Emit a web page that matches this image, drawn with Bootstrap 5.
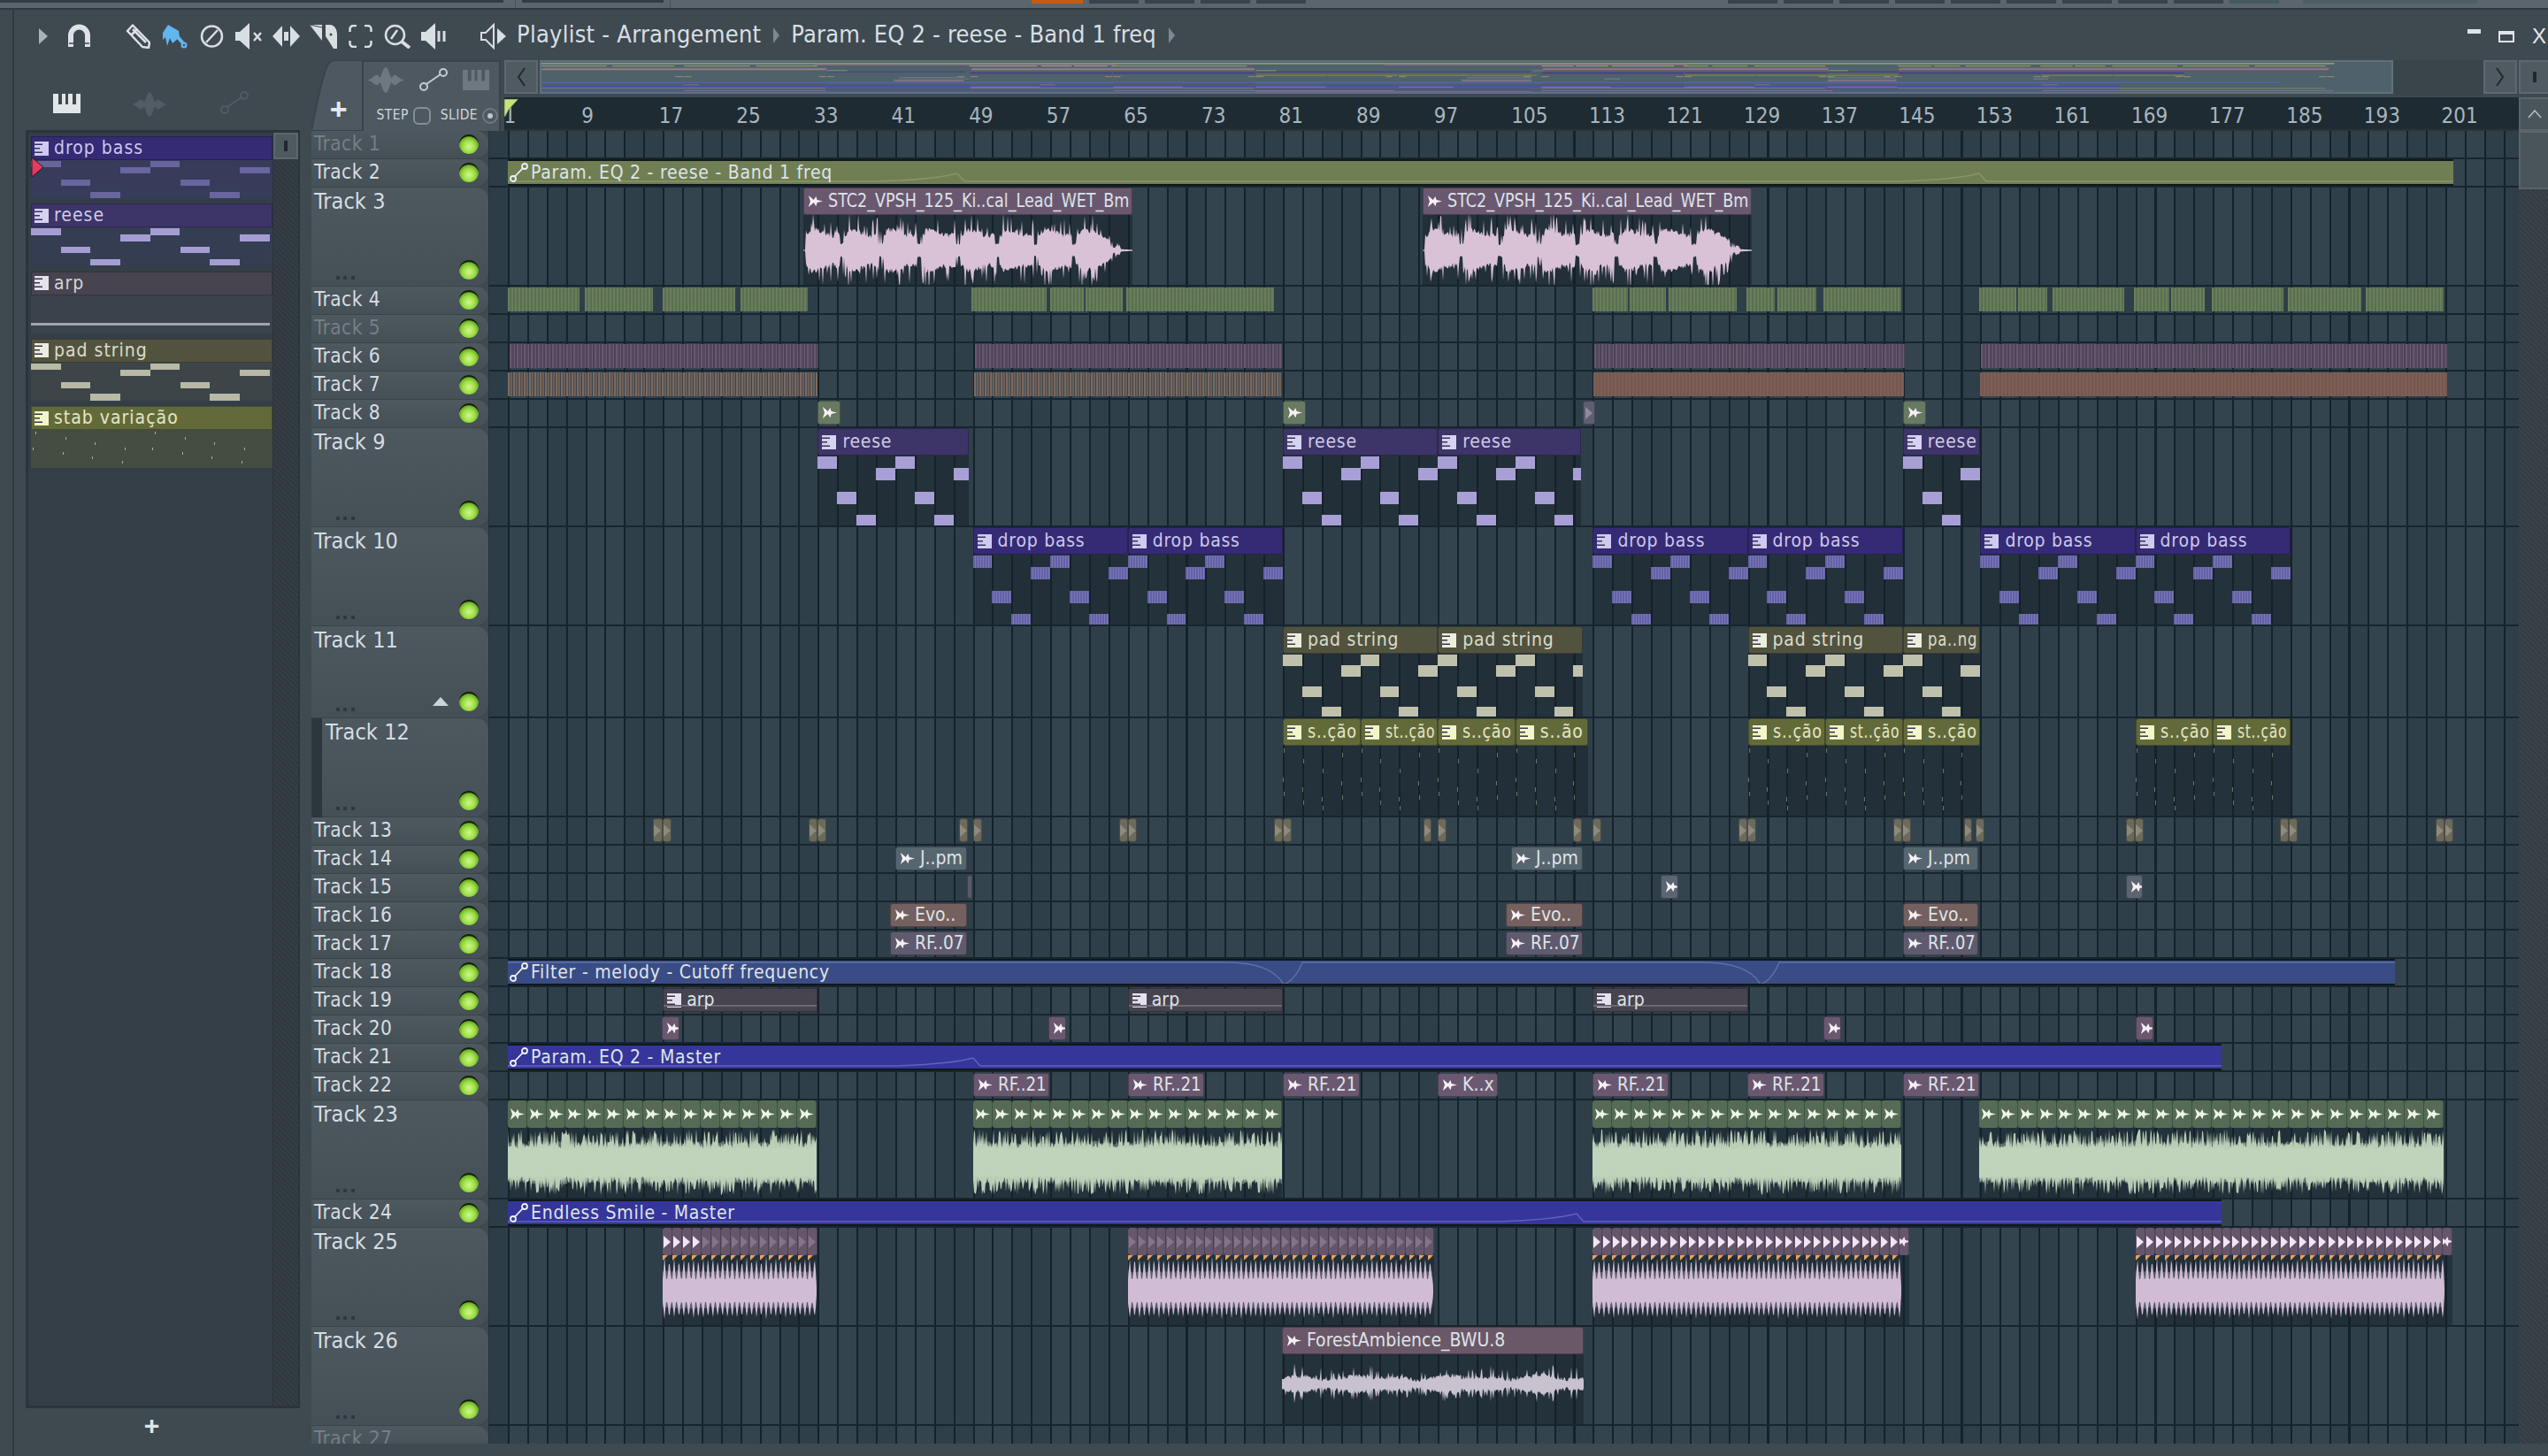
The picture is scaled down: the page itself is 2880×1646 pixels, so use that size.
<!DOCTYPE html>
<html lang="en">
<head>
<meta charset="UTF-8">
<title>Playlist - Arrangement</title>
<link href="https://cdn.jsdelivr.net/npm/bootstrap@5.3.0/dist/css/bootstrap.min.css" rel="stylesheet">
<style>
  html, body { height: 100%; }
  body { background: #3f4950; color: #d5dde2; font-family: "DejaVu Sans Condensed", "DejaVu Sans", sans-serif; font-size: 22px; line-height: 1; }

  /* main window strip */
  .topstrip { height: 11px; background: #5a656d; border-bottom: 2px solid #2f383e; gap: 7px; }
  .strip-box { height: 3px; background: #343c42; }
  .strip-a { width: 569px; margin-right: 6px; }
  .strip-div { width: 1px; height: 9px; background: #48525a; }
  .strip-b { width: 160px; }
  .strip-orange { width: 58px; height: 4px; background: #c85a10; margin-left: 401px; }
  .strip-tab { width: 56px; height: 4px; background: #3a4349; }
  .strip-gap { margin-left: 470px; }
  .strip-teal { width: 56px; height: 4px; background: #445a5c; }
  .strip-end { flex: 1; height: 4px; background: #4c6062; margin-left: 20px; margin-right: 80px; }

  .shell { border-left: 2px solid #30393f; margin-left: 14px; }
  .titlebar { height: 57px; padding-top: 3px; }
  .ttl-main { font-size: 27px; letter-spacing: .25px; margin-left: 12px; color: #d8dfe4; margin-top: -6px; }
  .ttl-sub { font-size: 27px; letter-spacing: .18px; color: #d8dfe4; margin-top: -6px; }
  .ttl-arrow { width: 0; height: 0; border-left: 7px solid #7d888f; border-top: 9px solid transparent; border-bottom: 9px solid transparent; margin: -3px 13px 0 14px; }
  .g10 { margin-left: 28px; } .g11 { margin-left: 11px; } .g12 { margin-left: 12px; } .g13 { margin-left: 13px; } .g14 { margin-left: 14px; } .g22 { margin-left: 22px; } .g38 { margin-left: 38px; } .g39 { margin-left: 39px; }
  .win-btns { gap: 20px; margin-right: -2px; }
  .wb-min { width: 15px; height: 5px; background: #dfe4e8; margin-bottom: 12px; }
  .wb-max { width: 18px; height: 13px; border: 2px solid #dfe4e8; border-top-width: 4px; }
  .wb-x { font-size: 24px; width: 20px; color: #e4e8eb; font-family: "Liberation Sans", sans-serif; }

  /* picker */
  .picker { width: 336px; padding-left: 13px; }
  .pick-tabs { height: 79px; padding-left: 31px; padding-bottom: 19px; }
  .pick-wave { margin-left: 58px; margin-bottom: -4px; }
  .pick-node { margin-left: 60px; margin-bottom: -1px; }
  .pick-box { height: 1445px; width: 310px; background: #343e46; border: 3px solid #2b343a; border-right-width: 2px; }
  .pick-list { width: 276px; padding: 4px 0 0 3px; gap: 6.3px; }
  .pick-item { height: 70px; }
  .pick-head { height: 27px; border: 1px solid rgba(15,20,30,.35); padding-left: 3px; gap: 6px; font-size: 21px; letter-spacing: 1px; }
  .pick-body { height: 43px; }
  .pick-note { position: absolute; height: 7.4px; }
  .pick-scroll { width: 29px; background: repeating-linear-gradient(45deg, #2f383e 0 2px, #353e45 2px 4px); border-left: 1px solid #2b343a; }
  .pick-stop { height: 30px; background: #4e5960; border: 2px solid #5b666d; }
  .pick-stop i { width: 4px; height: 12px; background: #20282d; }
  .pick-add { height: 40px; color: #dfe4e8; font-size: 30px; font-weight: 700; padding-right: 38px; font-family: "Liberation Sans", sans-serif; }
  .pick-mark { position: absolute; left: 3px; top: 27px; }

  /* arrangement header */
  .arr { width: 2528px; }
  .arr-head { height: 80px; }
  .tab-plus { width: 60px; }
  .tab-plus b { font-size: 34px; color: #e6eaed; font-family: "Liberation Sans", sans-serif; margin-bottom: 8px; margin-left: 8px; }
  .tab-snap { width: 160px; background: #4d5860; border: 2px solid #3a4349; border-bottom: 0; }
  .snap-row { gap: 17px; height: 40px; padding-left: 7px; }
  .snap-lbl { font-size: 15.5px; letter-spacing: .4px; color: #cfd6db; padding: 11px 0 0 18px; }
  .snap-box { width: 20px; height: 20px; border: 2px solid #838e95; border-radius: 6px; margin: 0 11px 0 5px; }
  .snap-dot { width: 18px; height: 18px; border: 2px solid #6d7880; border-radius: 50%; margin-left: 5px; }
  .snap-dot i { width: 6px; height: 6px; border-radius: 50%; background: #bfc7cc; }
  .arr-over { height: 42px; }
  .nav-btn { width: 38px; height: 38px; background: #4f5a61; border: 2px solid #5d6870; margin-right: 2px; }
  .nav-last { width: 33px; margin-right: 0; border-right: 0; }
  .nav-last i { width: 4px; height: 12px; background: #20282d; }
  .over-map { width: 2095px; height: 38px; background: #4f616b; border: 2px solid #60717b; }
  .over-rest { flex: 1; height: 40px; background: #3a444b; }
  .ruler { height: 38px; background: #1e2b33; border-bottom: 2px solid #27343c; padding-top: 9px; overflow: hidden; }
  .ruler-cell { flex: 0 0 87.6px; font-size: 24px; color: #a9b6be; }
  .ruler-flag { position: absolute; left: 0; top: 2px; }
  .up-btn { width: 33px; height: 38px; background: #4a545b; border: 2px solid #59646b; border-right: 0; }

  /* tracks */
  .tracks { height: 1484px; }
  .trk { flex: 0 0 auto; }
  .h32 { height: 32px; } .h104 { height: 104px; } .h112 { height: 112px; }
  .trk-name { width: 200px; background: linear-gradient(#4e585f, #454f56); border-radius: 0 14px 14px 0; padding: 3px 0 0 3px; font-size: 22.5px; letter-spacing: .45px; flex: 0 0 200px; box-shadow: inset 0 -1px 0 #3a4349; }
  .trk-big { font-size: 25px; letter-spacing: .1px; padding-top: 3px; }
  .trk-dim { color: #747f86; }
  .trk-ind { padding-left: 4px; border-left: 12px solid #2d363c; }
  .led { position: absolute; right: 11px; bottom: 6px; width: 22px; height: 22px; border-radius: 50%; background: radial-gradient(circle at 50% 62%, #d4f58c 0, #9ce04a 38%, #6fae24 62%, #13200a 68%, #13200a 78%, #6a747a 82%); }
  .trk-big .led { bottom: 8px; }
  .trk-dots { position: absolute; left: 28px; bottom: 8px; width: 21px; height: 4px; background: repeating-linear-gradient(90deg, #2f383e 0 4px, transparent 4px 8.5px); }
  .trk-ind .trk-dots { left: 16px; }
  .trk-tri { position: absolute; right: 45px; bottom: 14px; border-left: 9px solid transparent; border-right: 9px solid transparent; border-bottom: 10px solid #ccd3d8; }
  .trk-gutter { flex: 0 0 22px; background: #2d3d47; border-left: 1px solid #26333c; border-bottom: 2px solid #17252e; }
  .trk-grid { flex: 1; position: relative; border-bottom: 2px solid #17252e;
    background: repeating-linear-gradient(90deg, #14222b 0 2px, transparent 2px 21.9px), repeating-linear-gradient(90deg, #33444e 0 43.8px, #2f3f49 43.8px 87.6px); }
  .sbar { width: 33px; background: repeating-linear-gradient(45deg, #333c43 0 2px, #3a434a 2px 4px); }
  .sbar-thumb { height: 66px; background: #4a545b; border: 2px solid #59646b; border-right: 0; }

  /* clips on the playlist canvas */
  .clip { position: absolute; top: 0; bottom: 0; overflow: hidden; }
  .clip-head { height: 31px; border-radius: 3px; border: 1px solid rgba(12,18,24,.35); gap: 7px; padding-left: 4px; white-space: nowrap; font-size: 21px; letter-spacing: .75px; color: #dde3e7; overflow: hidden; }
  .clip-head span { display: inline-block; flex: 0 0 auto; transform-origin: left center; position: relative; z-index: 1; }
  .clip-head .lbl-a { letter-spacing: 0; margin-left: -1px; }
  .clip-body { position: absolute; left: 0; right: 0; top: 31px; bottom: 0; background: rgba(22,32,39,.5); }
  .cnote { position: absolute; }
  .tick { position: absolute; width: 1px; height: 5px; background: #687569; }
  .seg { flex: 1 1 0; height: 31px; border-right: 1px solid rgba(12,18,24,.3); border-radius: 3px; min-width: 0; overflow: hidden; }
  .auto-clip { border-top: 2px solid #10171c; border-bottom: 2px solid #10171c; }
  .auto-lbl { position: absolute; left: 2px; top: 2px; gap: 2px; font-size: 21px; letter-spacing: .75px; white-space: nowrap; color: #dfe4e8; }
  .hatch-g { background: repeating-linear-gradient(90deg, #6a7e5c 0 2px, #5a6e50 2px 4px); }
  .hatch-p { background: repeating-linear-gradient(90deg, #675870 0 2px, #54485e 2px 5px, #6b5c72 5px 6px, #4b4355 6px 8px); }
  .hatch-b { background: repeating-linear-gradient(90deg, #7c6a62 0 2px, #4a4f55 2px 3px, #6d6058 3px 5px, #3b444c 5px 6px); }
  .hatch-r { background: repeating-linear-gradient(90deg, #7e5e55 0 2px, #745850 2px 4px); }
  .strip-clip { top: 1px; bottom: 2px; }
  .row-clip .clip-head { height: 100%; }
  .thin-clip .clip-head { padding: 0; justify-content: center; }
  .arp-line { position: absolute; left: 0; right: 0; bottom: 5px; height: 2px; background: #6c6874; }
</style>
</head>
<body class="d-flex flex-column overflow-hidden">

<div class="topstrip d-flex flex-shrink-0">
  <div class="strip-box strip-a"></div><div class="strip-div"></div><div class="strip-box strip-b"></div><div class="strip-div"></div>
  <div class="strip-orange"></div>
  <div class="strip-tab"></div><div class="strip-tab"></div><div class="strip-tab"></div><div class="strip-tab"></div>
  <div class="strip-tab strip-gap"></div><div class="strip-tab"></div><div class="strip-tab"></div><div class="strip-tab"></div><div class="strip-tab"></div><div class="strip-tab"></div><div class="strip-tab"></div><div class="strip-tab"></div><div class="strip-tab"></div>
  <div class="strip-teal"></div><div class="strip-end"></div>
</div>

<div class="shell flex-grow-1 d-flex flex-column">
  <div class="titlebar d-flex align-items-center flex-shrink-0">
    <svg class="g10" width="10" height="18" viewBox="0 0 10 18"><path d="M0 0 10 9 0 18Z" fill="#a8b2b9"/></svg>
    <svg class="g22" width="27" height="28" viewBox="0 0 27 28"><path d="M4 26V13a9.500 9.500 0 0 1 19 0v13" fill="none" stroke="#dde2e6" stroke-width="6"/><path d="M2 22h5M20 22h5" stroke="#3f4950" stroke-width="1.500"/></svg>
    <svg class="g39" width="28" height="28" viewBox="0 0 28 28"><path d="M2 8 8 1.500 27 21 26 27 19 26ZM6 13 13 6M8 6l15 15" fill="none" stroke="#dde2e6" stroke-width="2.500" stroke-linejoin="round"/></svg>
    <svg class="g12" width="30" height="28" viewBox="0 0 30 28"><path d="M2 10 8 1l12 7 1 7-8 7-3-6-3 9-2-10-3 3Z" fill="#61b6ee"/><path d="M19 15 25 22" stroke="#61b6ee" stroke-width="4"/><circle cx="26" cy="24" r="3.500" fill="#61b6ee"/><circle cx="26" cy="24" r="1.200" fill="#3f4950"/></svg>
    <svg class="g14" width="27" height="26" viewBox="0 0 27 26"><circle cx="13.500" cy="13" r="11.500" fill="none" stroke="#d8dee2" stroke-width="2.500"/><path d="M7 20 20 6" stroke="#d8dee2" stroke-width="2.500"/></svg>
    <svg class="g13" width="31" height="30" viewBox="0 0 31 30"><path d="M0 10h5L16 0V30L5 20H0Z" fill="#d8dee2"/><path d="M21 11l8 9M29 11l-8 9" stroke="#d8dee2" stroke-width="2.500"/></svg>
    <svg class="g11" width="31" height="26" viewBox="0 0 31 26"><path d="M0 13 11 1V25ZM31 13 20 1V25Z" fill="#d8dee2"/><path d="M13 8h5v10h-5z" fill="#d8dee2"/></svg>
    <svg class="g11" width="31" height="28" viewBox="0 0 31 28"><path d="M0 1 14 19V1Z" fill="#d8dee2"/><path d="M0 1 14 4" stroke="#3f4950"/><path d="M18 1h5c5 0 8 5 8 11v16h-4l-5-8-4-6Z" fill="#d8dee2"/><circle cx="24" cy="12" r="1.500" fill="#3f4950"/></svg>
    <svg class="g13" width="27" height="26" viewBox="0 0 27 26" fill="none" stroke="#d8dee2" stroke-width="2.500"><path d="M1.500 8V5a4 4 0 0 1 4-4H9M18 1h3.500a4 4 0 0 1 4 4v3M25.500 18v3a4 4 0 0 1-4 4H18M9 25H5.500a4 4 0 0 1-4-4v-3"/></svg>
    <svg class="g13" width="31" height="28" viewBox="0 0 31 28"><circle cx="12.500" cy="12.500" r="10.500" fill="none" stroke="#d8dee2" stroke-width="2.500"/><path d="M20 20 29 27" stroke="#d8dee2" stroke-width="4"/><path d="M8 17 15 7" stroke="#d8dee2" stroke-width="2.500"/></svg>
    <svg class="g11" width="29" height="30" viewBox="0 0 29 30"><path d="M0 10h5L16 0V30L5 20H0Z" fill="#d8dee2"/><path d="M20 9V21M26 9V21" stroke="#d8dee2" stroke-width="3"/></svg>
    <svg class="g38" width="29" height="30" viewBox="0 0 29 30"><path d="M1 11h5L15 2V28L6 19H1Z" fill="none" stroke="#d8dee2" stroke-width="2"/><path d="M19 6 29 15 19 24Z" fill="#d8dee2"/></svg>
    <span class="ttl-main">Playlist - Arrangement</span>
    <span class="ttl-arrow"></span>
    <span class="ttl-sub">Param. EQ 2 - reese - Band 1 freq</span>
    <span class="ttl-arrow"></span>
    <div class="win-btns d-flex align-items-center ms-auto">
      <span class="wb-min"></span><span class="wb-max"></span><span class="wb-x">X</span>
    </div>
  </div>

  <div class="d-flex flex-shrink-0">
    <div class="picker d-flex flex-column flex-shrink-0">
      <div class="pick-tabs d-flex align-items-end">
        <svg width="31" height="22" viewBox="0 0 31 22"><path d="M0 0H31V22H0Z" fill="#e2e6e9"/><path d="M6 0h4v12H6ZM14 0h3v12h-3ZM22 0h4v12h-4Z" fill="#3f4950"/></svg>
        <svg class="pick-wave" width="40" height="28" viewBox="0 0 40 40" preserveAspectRatio="none"><path d="M0 20C6 18 8 12 10 12 12 12 13 16 14 16 15 16 17 0 20 0 23 0 25 16 26 16 27 16 28 12 30 12 32 12 34 18 40 20 34 22 32 28 30 28 28 28 27 24 26 24 25 24 23 40 20 40 17 40 15 24 14 24 13 24 12 28 10 28 8 28 6 22 0 20Z" fill="#515c64"/></svg>
        <svg class="pick-node" width="32" height="26" viewBox="0 0 32 26" fill="none" stroke="#515c64" stroke-width="2"><circle cx="5" cy="21" r="4"/><circle cx="27" cy="5" r="4"/><path d="M8 18 24 7"/></svg>
      </div>
      <div class="pick-box d-flex position-relative">
        <div class="pick-list d-flex flex-column" id="picker"></div>
        <div class="pick-scroll ms-auto">
          <div class="pick-stop d-flex align-items-center justify-content-center"><i></i></div>
        </div>
        <svg class="pick-mark" width="15" height="24" viewBox="0 0 15 24"><path d="M1 1 14 12 1 23Z" fill="#e83a5e" stroke="#1c2024" stroke-width="1"/></svg>
      </div>
      <div class="pick-add d-flex align-items-center justify-content-center">+</div>
    </div>

    <div class="arr d-flex flex-column flex-shrink-0">
      <div class="arr-head d-flex">
        <svg class="position-absolute" width="60" height="80" viewBox="0 0 60 80"><path d="M0 80C4 60 10 24 18 6Q21 0 28 0H58V80Z" fill="#4d5860" stroke="#3a4349" stroke-width="2"/></svg>
        <div class="tab-plus d-flex align-items-end justify-content-center position-relative"><b>+</b></div>
        <div class="tab-snap d-flex flex-column flex-shrink-0">
          <div class="snap-row d-flex align-items-center">
            <svg width="42" height="29" viewBox="0 0 40 40" preserveAspectRatio="none"><path d="M0 20C6 18 8 12 10 12 12 12 13 16 14 16 15 16 17 0 20 0 23 0 25 16 26 16 27 16 28 12 30 12 32 12 34 18 40 20 34 22 32 28 30 28 28 28 27 24 26 24 25 24 23 40 20 40 17 40 15 24 14 24 13 24 12 28 10 28 8 28 6 22 0 20Z" fill="#6d7880"/></svg>
            <svg width="32" height="26" viewBox="0 0 32 26" fill="none" stroke="#c4ccd1" stroke-width="2"><circle cx="5" cy="21" r="4"/><circle cx="27" cy="5" r="4"/><path d="M8 18 24 7"/></svg>
            <svg width="30" height="23" viewBox="0 0 31 24" preserveAspectRatio="none"><path d="M0 0H31V24H0Z" fill="#6d7880"/><path d="M6 0h4v13H6ZM14 0h3v13h-3ZM22 0h4v13h-4Z" fill="#4d5860"/></svg>
          </div>
          <div class="snap-lbl d-flex align-items-center">STEP<span class="snap-box"></span>SLIDE<span class="snap-dot d-flex align-items-center justify-content-center"><i></i></span></div>
        </div>
        <div class="d-flex flex-column flex-grow-1 ms-1">
          <div class="arr-over d-flex">
            <div class="nav-btn d-flex align-items-center justify-content-center"><svg width="10" height="22" viewBox="0 0 10 22"><path d="M9 1 2 11 9 21" fill="none" stroke="#1f292f" stroke-width="2"/></svg></div>
            <svg class="over-map" id="overview" viewBox="0 0 2091 34" preserveAspectRatio="none"></svg>
            <div class="over-rest"></div>
            <div class="nav-btn d-flex align-items-center justify-content-center"><svg width="10" height="22" viewBox="0 0 10 22"><path d="M1 1 8 11 1 21" fill="none" stroke="#1f292f" stroke-width="2"/></svg></div>
            <div class="nav-btn nav-last d-flex align-items-center justify-content-center"><i></i></div>
          </div>
          <div class="d-flex">
            <div class="ruler flex-grow-1 d-flex position-relative" id="ruler">
              <svg class="ruler-flag" width="16" height="22" viewBox="0 0 16 22"><path d="M0 0H16L5 12 1 20H0Z" fill="#c5e27c" stroke="#24323a" stroke-width=".5"/></svg>
            </div>
            <div class="up-btn d-flex align-items-center justify-content-center"><svg width="16" height="10" viewBox="0 0 16 10"><path d="M1 9 8 1 15 9" fill="none" stroke="#b7c0c6" stroke-width="1.500"/></svg></div>
          </div>
        </div>
      </div>
      <div class="d-flex">
        <div class="tracks flex-grow-1 d-flex flex-column overflow-hidden" id="tracks"></div>
        <div class="sbar"><div class="sbar-thumb"></div></div>
      </div>
    </div>
  </div>
</div>

<script>
  // small seeded random, so the waveforms come out the same on every load
  let seed = 7;
  function rnd() { seed = (seed * 16807) % 2147483647; return seed / 2147483647; }

  const GX = 574, BAR = 10.95;
  const b = n => GX + (n - 1) * BAR;

  const icoAudio = (c = '#f6f0f6') => `<svg width="17" height="15" viewBox="0 0 20 16" preserveAspectRatio="none" class="flex-shrink-0"><path d="M1 1 8 6.500 11 2 12.500 6.500 20 8 12.500 9.500 11 14 8 9.500 1 15 3.500 8Z" fill="${c}"/></svg>`;
  const icoTri = c => `<svg width="8" height="14" viewBox="0 0 8 14" class="flex-shrink-0"><path d="M0 0 8 7 0 14Z" fill="${c}"/></svg>`;
  const icoPat = c => `<svg width="16" height="16" viewBox="0 0 16 16" class="flex-shrink-0"><path d="M0 0H16V16H0Z" fill="${c}"/><path d="M0 2.500H9V4H0ZM0 7H6V8.500H0ZM0 11.500H9V13H0Z" fill="#3a3550"/></svg>`;
  const icoAuto = () => `<svg width="22" height="22" viewBox="0 0 22 22" class="flex-shrink-0" fill="none" stroke="#f0f2f4" stroke-width="1.800"><circle cx="4" cy="18" r="3"/><circle cx="17" cy="4" r="3"/><path d="M6 15.500 15 6"/></svg>`;

  const PAT = [0, 3, 5, 1];
  const STYLE = {
    drop:  { head: '#352a74', fg: '#cbc6ee', ico: '#cfcaf2', note: '#6f6bb0', pbody: '#363c5a', pnote: '#69659f', label: 'drop bass' },
    reese: { head: '#3d3468', fg: '#cfcbe8', ico: '#d6d2f2', note: '#a89fd6', pbody: '#343d52', pnote: '#a59dd2', label: 'reese' },
    arp:   { head: '#48444f', fg: '#d5d2da', ico: '#e6e2ec', note: '#9a96a8', pbody: '#3a424b', pnote: '#a5a2b0', label: 'arp' },
    pad:   { head: '#52533f', fg: '#dadccb', ico: '#ecedde', note: '#bfc1ad', pbody: '#3d4548', pnote: '#b8baa6', label: 'pad string' },
    stab:  { head: '#636a3a', fg: '#e3e6c6', ico: '#f3f6c8', note: '#687569', pbody: '#454c42', pnote: '#8a9078', label: 'stab variação' }
  };

  // pattern list on the left
  const picker = document.getElementById('picker');
  Object.keys(STYLE).forEach(k => {
    const s = STYLE[k];
    let notes = '';
    if (k === 'arp') {
      notes = `<div class="pick-note" style="left:0;width:270px;top:31px;height:3px;background:${s.pnote}"></div>`;
    } else if (k === 'stab') {
      for (let i = 0; i < 8; i++) {
        const x = i * 33.7 + 2;
        notes += `<div class="tick" style="left:${x + 3}px;top:${2 + (i % 4) * 6}px;height:3px;background:#aab0a0"></div>`;
        notes += `<div class="tick" style="left:${x}px;top:${20 + (i % 4) * 5}px;height:3px;background:#aab0a0"></div>`;
      }
    } else {
      for (let i = 0; i < 8; i++) {
        notes += `<div class="pick-note" style="left:${i * 33.7}px;width:33.7px;top:${PAT[i % 4] * 6.9 + 1}px;background:${s.pnote}"></div>`;
      }
    }
    picker.insertAdjacentHTML('beforeend', `<div class="pick-item">
      <div class="pick-head d-flex align-items-center" style="background:${s.head};color:${s.fg}">${icoPat(s.ico)}<span>${s.label}</span></div>
      <div class="pick-body position-relative overflow-hidden" style="background:${s.pbody}">${notes}</div></div>`);
  });

  // ruler numbers, one every 8 bars
  const ruler = document.getElementById('ruler');
  for (let n = 1; n <= 201; n += 8) ruler.insertAdjacentHTML('beforeend', `<div class="ruler-cell">${n}</div>`);

  function wavePath(w, cy, fn) {
    const up = [], dn = [];
    for (let x = 0; x <= w; x++) { const [a, c] = fn(x); up.push(`${x} ${(cy - a).toFixed(1)}`); dn.unshift(`${x} ${(cy + c).toFixed(1)}`); }
    return `M${up.join('L')}L${dn.join('L')}Z`;
  }
  // layers: [opacity, fn], outer fuzz first and the solid core last
  function waveSvg(w, h, cy, color, layers) {
    const paths = layers.map(l => `<path d="${wavePath(w, cy, l[1])}" fill="${color}" opacity="${l[0]}"/>`).join('');
    return `<svg class="position-absolute top-0 start-0" width="${w}" height="${h}" viewBox="0 0 ${w} ${h}">${paths}</svg>`;
  }

  const ov = [];
  function note(t, x0, x1, col) { ov.push({ t, x0, x1, col }); }

  function patClip(t, h, x0, x1, kind, label) {
    const s = STYLE[kind], w = x1 - x0;
    const bodyH = h - 33, nh = bodyH / 6;
    let inner = '';
    if (kind === 'stab') {
      for (let i = 0; i * 21.9 < w; i++) {
        const x = i * 21.9 + 1;
        inner += `<div class="tick" style="left:${x}px;top:${[3, 15, 26, 8][i % 4]}px"></div>`;
        inner += `<div class="tick" style="left:${x - 1}px;top:${[36, 47, 58, 40][i % 4]}px"></div>`;
        inner += `<div class="tick" style="left:${x}px;top:${[52, 62, 68, 56][i % 4]}px"></div>`;
      }
    } else {
      for (let i = 0; i * 21.9 < w; i++) {
        const stripe = kind === 'drop' ? 'repeating-linear-gradient(90deg,#6462a6 0 2px,#7a78b8 2px 3px)' : s.note;
        inner += `<div class="cnote" style="left:${i * 21.9}px;width:21.9px;height:${nh + 1}px;top:${PAT[i % 4] * nh + 1}px;background:${stripe}"></div>`;
      }
    }
    note(t, x0, x1, s.head);
    return `<div class="clip" style="left:${x0 - GX}px;width:${w}px">
      <div class="clip-head d-flex align-items-center" style="background:${s.head};color:${s.fg}">${icoPat(s.ico)}<span>${label || s.label}</span></div>
      <div class="clip-body overflow-hidden">${inner}</div></div>`;
  }
  function rowClip(t, x0, x1, bg, label, ico, extra) {
    note(t, x0, x1, bg);
    return `<div class="clip row-clip strip-clip" style="left:${x0 - GX}px;width:${x1 - x0}px">
      <div class="clip-head d-flex align-items-center position-relative" style="background:${bg}">${ico || icoAudio()}${label ? `<span class="lbl-a">${label}</span>` : ''}${extra || ''}</div></div>`;
  }
  // too narrow to hold the full icon, only a dim triangle shows
  function thinClip(t, x0, x1, bg, c) {
    note(t, x0, x1, bg);
    return `<div class="clip row-clip strip-clip thin-clip" style="left:${x0 - GX}px;width:${x1 - x0}px">
      <div class="clip-head d-flex align-items-center" style="background:${bg}">${icoTri(c)}</div></div>`;
  }
  function autoClip(t, x1, bg, line, label, d, ovCol) {
    const w = x1 - GX;
    note(t, GX, x1, ovCol);
    return `<div class="clip auto-clip" style="left:0;width:${w}px;background:${bg}">
      <svg class="position-absolute top-0 start-0" width="${w}" height="28"><path d="${d}" fill="none" stroke="${line}" stroke-width="1.500"/></svg>
      <div class="auto-lbl d-flex align-items-center">${icoAuto()}<span>${label}</span></div></div>`;
  }
  // automation line that sits low and jumps up just before the drop
  function lowLine(w, list) {
    let d = 'M0 23';
    list.forEach(p => { const x = p - GX; d += `L${x - 90} 23Q${x - 25} 21 ${x} 14L${x + 8} 23`; });
    return d + `L${w} 23`;
  }
  // automation line that sits high and dips to the bottom of the clip
  function highLine(w, list) {
    let d = 'M0 2';
    list.forEach(p => { const x = p - GX; d += `L${x - 65} 2Q${x - 14} 2 ${x} 27Q${x + 13} 22 ${x + 21} 2`; });
    return d + `L${w} 2`;
  }
  function hatchClips(t, list, cls, col) {
    return list.map(p => { note(t, p[0], p[1], col); return `<div class="clip strip-clip ${cls}" style="left:${p[0] - GX}px;width:${p[1] - p[0]}px"></div>`; }).join('');
  }
  const s18 = v => v * 1.8367;
  const from1568 = a => a.map(p => [s18(p[0]), s18(p[1])]);

  function audioClip(t, x0, x1, bg, label, wave) {
    note(t, x0, x1, bg);
    return `<div class="clip" style="left:${x0 - GX}px;width:${x1 - x0}px">
      <div class="clip-head d-flex align-items-center" style="background:${bg}">${icoAudio()}<span class="lbl-a">${label}</span></div>
      <div class="clip-body overflow-hidden">${wave}</div></div>`;
  }

  function stcWave(w) {
    return waveSvg(w, 81, 40, '#d9c2d6', [[1, x => {
      if (x < 3) return [.6, .6];
      const left = w - x;
      if (left < 14) return [.6 + left * .06, .6 + left * .06];
      const fade = left < 36 ? (left - 10) / 26 : 1;
      const ph = (x % 43.8) / 43.8, dip = ph < .06 || ph > .94 ? .35 : (ph < .14 ? .8 : 1);
      const env = (17 + rnd() * 6 + 3 * Math.sin(x / 7)) * dip * fade;
      const up = rnd() > .8 ? 4 + rnd() * 15 : 0, dn = rnd() > .8 ? 5 + rnd() * 18 : 0;
      return [env + up * fade, env + dn * fade];
    }]]);
  }
  function groupClip(t, x0, x1, n, headBg, wave, lit, star) {
    const w = x1 - x0;
    note(t, x0, x1, headBg);
    let segs = '';
    for (let i = 0; i < n; i++) {
      let ic;
      if (star) ic = icoAudio('#eef6ea');
      else if (lit === n && i === n - 1) ic = icoAudio('#f0e6f4');
      else ic = icoTri(i < lit ? '#f0e6f4' : '#84748a');
      segs += `<div class="seg d-flex align-items-center justify-content-center" style="background:${headBg}">${ic}</div>`;
    }
    return `<div class="clip" style="left:${x0 - GX}px;width:${w}px"><div class="d-flex">${segs}</div>
      <div class="clip-body overflow-hidden">${wave}</div></div>`;
  }
  const greenWave = w => waveSvg(w, 81, 39, '#c0d4bc', [
    [.95, () => [rnd() > .62 ? 28 + rnd() * 10 : 16 + rnd() * 8, rnd() > .62 ? 27 + rnd() * 10 : 16 + rnd() * 8]],
    [.4, () => [19 + rnd() * 6, 19 + rnd() * 6]],
    [1, () => [14 + rnd() * 4, 14 + rnd() * 4]]
  ]);
  const pinkWave = (w, ww) => {
    let marks = '';
    for (let x = 0; x < ww - 4; x += 10.95) marks += `<svg class="position-absolute" style="left:${x}px;top:0" width="6" height="6"><path d="M0 0H6L0 6Z" fill="#e8a25c"/></svg>`;
    const tooth = x => {
      const ph = x % 5.475;
      return Math.max(0, 1 - Math.abs(ph - 2) / 2);
    };
    return waveSvg(ww, 81, 40, '#d0bcd4', [
      [1, x => x >= ww - 1 ? [0, 0] : [13 + tooth(x) * (22 + rnd() * 5), 13 + tooth(x) * (17 + rnd() * 3)]],
      [.3, x => x >= ww - 1 ? [0, 0] : [20 + rnd() * 3, 18 + rnd() * 3]],
      [1, x => x >= ww - 1 ? [0, 0] : [12 + rnd() * 2, 11 + rnd() * 2]]
    ]) + marks;
  };
  const forestWave = w => waveSvg(w, 81, 34, '#c8c2ce', [[1, x => {
    const env = 5 + 3 * Math.sin(x / 37) * Math.sin(x / 11);
    const a = env + rnd() * 5 + (rnd() > .82 ? rnd() * 13 : 0);
    return [a, a * .9 + (rnd() > .85 ? rnd() * 10 : 0)];
  }]]);

  // every track: what sits on its lane
  const T = {
    2: t => autoClip(t, 2773, '#6f7f53', '#88966a', 'Param. EQ 2 - reese - Band 1 freq', lowLine(2199, [1082, 2237]), '#a9b86a'),
    3: t => audioClip(t, 908, 1280, '#6a5870', 'STC2_VPSH_125_Ki..cal_Lead_WET_Bm', stcWave(372)) + audioClip(t, 1608, 1980, '#6a5870', 'STC2_VPSH_125_Ki..cal_Lead_WET_Bm', stcWave(372)),
    4: t => hatchClips(t, [[574, 655], [661, 738], [749, 831], [837, 913]].concat(from1568([[598, 644], [646, 667], [668, 691], [693, 784], [980, 1002], [1003, 1025], [1027, 1069], [1075, 1092], [1094, 1118], [1122, 1170], [1218, 1241], [1242, 1260], [1263, 1307], [1313, 1335], [1336, 1357], [1361, 1405], [1408, 1453], [1456, 1504]])), 'hatch-g', '#6a7e5c'),
    6: t => hatchClips(t, [[576, 925], [1102, 1449], [1802, 2153], [2239, 2767]], 'hatch-p', '#6a5a70'),
    7: t => hatchClips(t, [[574, 924], [1101, 1449]], 'hatch-b', '#7a6a62') + hatchClips(t, [[1801, 2152], [2238, 2766]], 'hatch-r', '#7e5e55'),
    8: t => rowClip(t, 924, 950, '#687a62', '') + rowClip(t, 1450, 1476, '#687a62', '') + thinClip(t, 1789, 1803, '#5d5f70', '#8b8d9c') + rowClip(t, 2151, 2177, '#687a62', ''),
    9: t => patClip(t, 112, b(33), 1095, 'reese') + patClip(t, 112, b(81), b(97), 'reese') + patClip(t, 112, b(97), 1787, 'reese') + patClip(t, 112, b(145), b(153), 'reese'),
    10: t => [[49, 65], [65, 81], [113, 129], [129, 145], [153, 169], [169, 185]].map(p => patClip(t, 112, b(p[0]), b(p[1]), 'drop')).join(''),
    11: t => patClip(t, 104, b(81), b(97), 'pad') + patClip(t, 104, b(97), 1789, 'pad') + patClip(t, 104, b(129), b(145), 'pad') + patClip(t, 104, b(145), b(153), 'pad', 'pa..ng'),
    12: t => [[81, 89, 's..ção'], [89, 97, 'st..ção'], [97, 105, 's..ção'], [105, 112, 's..ão'], [129, 137, 's..ção'], [137, 145, 'st..ção'], [145, 153, 's..ção'], [169, 177, 's..ção'], [177, 185, 'st..ção']].map(p => patClip(t, 112, b(p[0]), b(p[1]) + (p[1] === 112 ? 6 : 0), 'stab', p[2])).join(''),
    13: t => [[738, 748.500], [748.500, 759], [914, 924], [924, 934], [1084, 1094], [1100, 1110], [1265, 1275], [1275, 1285], [1440, 1450], [1450, 1460], [1609, 1618], [1625, 1635], [1778, 1788], [1800, 1810], [1965, 1975], [1975, 1985], [2140, 2150], [2150, 2160], [2220, 2229], [2233, 2243], [2403, 2413], [2413, 2423], [2577, 2587], [2587, 2597], [2753, 2763], [2763, 2773]].map(p => thinClip(t, p[0], p[1], '#6c6a5c', '#8d8b7c')).join(''),
    14: t => [[1012, 1093], [1708, 1789], [2151, 2236]].map(p => rowClip(t, p[0], p[1], '#57656f', 'J..pm')).join(''),
    15: t => thinClip(t, 1093, 1099, '#5a5a6e', '#5a5a6e') + rowClip(t, 1877, 1897, '#5b6570', '') + rowClip(t, 2403, 2422, '#5b6570', ''),
    16: t => [[1006, 1093], [1702, 1789], [2151, 2236]].map(p => rowClip(t, p[0], p[1], '#74605e', 'Evo..')).join(''),
    17: t => [[1006, 1093], [1702, 1789], [2151, 2236]].map(p => rowClip(t, p[0], p[1], '#5f5a6e', 'RF..07')).join(''),
    18: t => autoClip(t, 2707, '#3a4c86', '#5e70a6', 'Filter - melody - Cutoff frequency', highLine(2133, [1451, 1990]), '#4f68bc'),
    19: t => [[17, 33], [65, 81], [113, 129]].map(p => rowClip(t, b(p[0]), b(p[1]), '#48444f', 'arp', icoPat('#e6e2ec'), '<i class="arp-line"></i>')).join(''),
    20: t => [[748, 768], [1185, 1205], [2061, 2081], [2414, 2434]].map(p => rowClip(t, p[0], p[1], '#6a5870', '')).join(''),
    21: t => autoClip(t, 2511, '#35359a', '#5f63c0', 'Param. EQ 2 - Master', lowLine(1937, [1100]), '#4b48c8'),
    22: t => [[1100, 1186], [1275, 1361], [1450, 1537], [1800, 1886], [1975, 2062], [2151, 2237]].map(p => rowClip(t, p[0], p[1], '#6a5870', 'RF..21')).join('') + rowClip(t, 1625, 1693, '#6a5870', 'K..x'),
    23: t => [[574, 923, 16], [1100, 1449, 16], [1800, 2149, 16], [2237, 2762, 24]].map(p => groupClip(t, p[0], p[1], p[2], '#566b55', greenWave(p[1] - p[0]), p[2], true)).join(''),
    24: t => autoClip(t, 2511, '#35359a', '#5f63c0', 'Endless Smile - Master', lowLine(1937, [1782]), '#4b48c8'),
    25: t => groupClip(t, 749, 924, 16, '#66566c', pinkWave(175, 175), 4) + groupClip(t, 1275, 1621, 32, '#66566c', pinkWave(346, 346), 0) + groupClip(t, 1800, 2158, 33, '#66566c', pinkWave(358, 350), 33) + groupClip(t, 2414, 2772, 33, '#66566c', pinkWave(358, 350), 33),
    26: t => audioClip(t, 1449, 1790, '#6a5868', 'ForestAmbience_BWU.8', forestWave(341))
  };
  const HEIGHT = { 3: 112, 9: 112, 10: 112, 11: 104, 12: 112, 23: 112, 25: 112, 26: 112 };
  const DIM = [1, 5, 27];
  const tracks = document.getElementById('tracks');
  for (let n = 1; n <= 27; n++) {
    const h = HEIGHT[n] || 32;
    const big = h > 32;
    const cls = ['trk-name', 'position-relative', big ? 'trk-big' : '', DIM.includes(n) ? 'trk-dim' : '', n === 12 ? 'trk-ind' : ''].join(' ');
    const extras = (big ? '<span class="trk-dots"></span>' : '') + (n === 11 ? '<span class="trk-tri"></span>' : '');
    const lane = T[n] ? T[n](n) : '';
    tracks.insertAdjacentHTML('beforeend', `<div class="trk d-flex h${h}">
      <div class="${cls}">Track ${n}${n < 27 ? '<span class="led"></span>' : ''}${extras}</div>
      <div class="trk-gutter ms-auto"></div>
      <div class="trk-grid">${lane}</div></div>`);
  }

  // squeeze labels that are wider than their clip
  document.querySelectorAll('.clip-head span').forEach(sp => {
    const head = sp.parentElement;
    const room = head.clientWidth - sp.offsetLeft - 2;
    if (sp.offsetWidth > room) sp.style.transform = `scaleX(${(room / sp.offsetWidth).toFixed(3)})`;
  });

  // the overview is a miniature of the same clips, one thin line per track
  function lighten(hex, f) {
    const v = [1, 3, 5].map(i => Math.min(255, Math.round(parseInt(hex.substr(i, 2), 16) * f)));
    return `rgb(${v.join(',')})`;
  }
  const map = document.getElementById('overview');
  map.innerHTML = ov.map(c => {
    const x = (c.x0 - GX) * .922, w = Math.max(1, (c.x1 - c.x0) * .922 - 1);
    const y = (c.t - 1) * 1.33;
    const col = [2, 18, 21, 24].includes(c.t) ? c.col : lighten(c.col, 1.25);
    return `<rect x="${x.toFixed(1)}" y="${y.toFixed(1)}" width="${w.toFixed(1)}" height="1.200" fill="${col}"/>`;
  }).join('');
</script>
<script src="https://cdn.jsdelivr.net/npm/bootstrap@5.3.0/dist/js/bootstrap.bundle.min.js"></script>
</body>
</html>
